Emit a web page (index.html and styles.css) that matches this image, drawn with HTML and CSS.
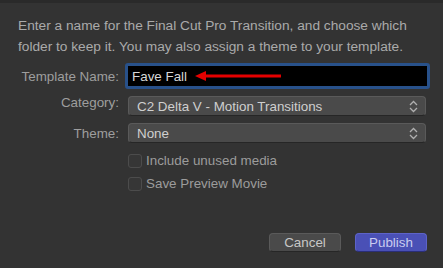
FILE: index.html
```html
<!DOCTYPE html>
<html lang="en">
<head>
  <meta charset="UTF-8" />
  <title>Publish Template</title>
  <link rel="stylesheet" href="styles.css">
</head>
<body>
  <div class="dialog">
    <p class="intro">Enter a name for the Final Cut Pro Transition, and choose which folder to keep it. You may also assign a theme to your template.</p>

    <div class="form">
      <label class="label">Template Name:</label>
      <div class="name-field">
        <span class="name-text">Fave Fall</span>
        <svg class="arrow" width="86" height="10" viewBox="0 0 86 10">
          <polygon points="0,5 11,0 11,10" fill="#e40000" />
          <rect x="10" y="3.5" width="76" height="3" fill="#e40000" />
        </svg>
      </div>

      <label class="label">Category:</label>
      <div class="select">
        <span>C2 Delta V - Motion Transitions</span>
        <svg class="chev" width="9" height="13" viewBox="0 0 9 13">
          <path d="M1 5 L4.5 1.5 L8 5 M1 8 L4.5 11.5 L8 8" fill="none" stroke="#b0b0b0" stroke-width="1.3" />
        </svg>
      </div>

      <label class="label theme-label">Theme:</label>
      <div class="select theme-select">
        <span>None</span>
        <svg class="chev" width="9" height="13" viewBox="0 0 9 13">
          <path d="M1 5 L4.5 1.5 L8 5 M1 8 L4.5 11.5 L8 8" fill="none" stroke="#b0b0b0" stroke-width="1.3" />
        </svg>
      </div>

      <div></div>
      <div class="checks">
        <div class="check"><span class="box"></span>Include unused media</div>
        <div class="check"><span class="box"></span>Save Preview Movie</div>
      </div>
    </div>

    <div class="buttons">
      <button class="btn">Cancel</button>
      <button class="btn primary">Publish</button>
    </div>
  </div>
</body>
</html>
```

FILE: styles.css
```css
* {
  box-sizing: border-box;
}
body {
  margin: 0;
  background-color: #333333;
  font-family: "Liberation Sans", Arial, sans-serif;
  color: #a6a6a6;
}
.dialog {
  width: 443px;
  height: 268px;
  border-top: 3px solid #2a2a2a;
  padding: 12px 13px 0 18px;
}
.intro {
  margin: 0;
  font-size: 13.7px;
  line-height: 21px;
  color: #aaaaaa;
}
.form {
  display: grid;
  grid-template-columns: 101px 305px;
  column-gap: 6px;
  align-items: center;
  margin-top: 6px;
  font-size: 13.4px;
}
.label {
  text-align: right;
  color: #9e9e9e;
}
.name-field {
  height: 26px;
  border: 3px solid #28518a;
  border-radius: 3px;
  background-color: #000;
  display: flex;
  align-items: center;
  padding-left: 4px;
  color: #d8d8d8;
}
.arrow {
  margin-left: 8px;
}
.select {
  height: 20px;
  margin: 7px 4px 0 3px;
  background-color: #4a4a4a;
  border: 1px solid #5a5a5a;
  border-bottom-color: #262626;
  border-radius: 4px;
  display: flex;
  align-items: center;
  justify-content: space-between;
  padding: 0 7px 0 8px;
  color: #cfcfcf;
}
.theme-label {
  margin-top: 7px;
}
.theme-select {
  margin-top: 7px;
}
.checks {
  display: flex;
  flex-direction: column;
  gap: 8px;
  margin: 10px 0 0 3px;
}
.check {
  display: flex;
  align-items: center;
  gap: 4px;
  color: #9c9c9c;
}
.box {
  width: 14px;
  height: 14px;
  border: 1px solid #4c4c4c;
  border-radius: 3px;
  background-color: #363636;
}
.buttons {
  display: flex;
  justify-content: flex-end;
  gap: 14px;
  margin-top: 42px;
  padding-right: 3px;
}
.btn {
  width: 72px;
  height: 19px;
  font-family: inherit;
  font-size: 13.4px;
  line-height: 17px;
  padding: 0;
  border-radius: 4px;
  border: 1px solid #5a5a5a;
  border-bottom-color: #262626;
  background-color: #4a4a4a;
  color: #c7c7c7;
}
.primary {
  background-color: #4a50b6;
  border-color: #5d63c8;
  border-bottom-color: #2a2e78;
  color: #c9ccf0;
}
```
